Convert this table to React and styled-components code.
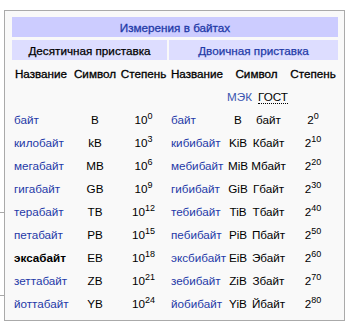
import React from "react";
import styled, { createGlobalStyle } from "styled-components";

const GlobalStyle = createGlobalStyle`
  body {
    margin: 0;
    background: #ffffff;
    font-family: "Liberation Sans", Arial, sans-serif;
  }
`;

const Page = styled.div`
  position: relative;
  width: 351px;
  height: 326px;
  padding: 10px 0 0 4px;
  box-sizing: border-box;
`;

const Tick = styled.div`
  position: absolute;
  left: 0;
  top: ${(p) => p.top}px;
  width: 4px;
  height: 1px;
  background: #a8a8a8;
`;

const InfoBox = styled.div`
  width: 341px;
  box-sizing: border-box;
  border: 1px solid #aaaaaa;
  background: #f9f9f9;
  padding: 3px 4px 4px 5px;
`;

const Table = styled.table`
  table-layout: fixed;
  width: 330px;
  border-collapse: separate;
  border-spacing: 2px 3px;
  font-size: 11.7px;
  color: #000;
`;

const Row = styled.tr`
  height: 20px;
`;

const TitleCell = styled.th`
  background: #ccccff;
  color: #1f3aa8;
  font-weight: normal;
  -webkit-text-stroke: 0.3px #1f3aa8;
  padding: 0;
  text-align: center;
`;

const GroupCell = styled.th`
  background: #ddddff;
  color: ${(p) => (p.link ? "#1f3aa8" : "#000")};
  font-weight: normal;
  -webkit-text-stroke: 0.25px ${(p) => (p.link ? "#1f3aa8" : "#000")};
  padding: 0;
  text-align: center;
`;

const HeadCell = styled.th`
  font-weight: normal;
  -webkit-text-stroke: 0.3px #000;
  padding: 0;
  text-align: center;
  white-space: nowrap;
`;

const SubHead = styled.td`
  padding: 0 0 0 ${(p) => p.shift || 0}px;
  text-align: center;
  color: ${(p) => (p.link ? "#3a55b0" : "#000")};
`;

const Abbr = styled.span`
  border-bottom: 1px dotted #000;
`;

const Cell = styled.td`
  padding: 0 0 0 ${(p) => (p.name ? 2 : 0)}px;
  text-align: ${(p) => (p.name ? "left" : "center")};
  white-space: nowrap;
  color: ${(p) => (p.link ? "#1f3aa8" : "#000")};
  font-weight: ${(p) => (p.strong ? "bold" : "normal")};
`;

const Sup = styled.sup`
  font-size: 9px;
  line-height: 1;
  vertical-align: 5px;
`;

const rows = [
  ["байт", "B", 0, "байт", "B", "байт", 0],
  ["килобайт", "kB", 3, "кибибайт", "KiB", "Кбайт", 10],
  ["мегабайт", "MB", 6, "мебибайт", "MiB", "Мбайт", 20],
  ["гигабайт", "GB", 9, "гибибайт", "GiB", "Гбайт", 30],
  ["терабайт", "TB", 12, "тебибайт", "TiB", "Тбайт", 40],
  ["петабайт", "PB", 15, "пебибайт", "PiB", "Пбайт", 50],
  ["эксабайт", "EB", 18, "эксбибайт", "EiB", "Эбайт", 60],
  ["зеттабайт", "ZB", 21, "зебибайт", "ZiB", "Збайт", 70],
  ["йоттабайт", "YB", 24, "йобибайт", "YiB", "Йбайт", 80],
];

export default function App() {
  return (
    <>
      <GlobalStyle />
      <Page>
        <Tick top={212} />
        <Tick top={295} />
        <InfoBox>
          <Table>
            <colgroup>
              <col style={{ width: 58 }} />
              <col style={{ width: 46 }} />
              <col style={{ width: 47 }} />
              <col style={{ width: 56 }} />
              <col style={{ width: 22 }} />
              <col style={{ width: 35 }} />
              <col style={{ width: 50 }} />
            </colgroup>
            <tbody>
              <Row>
                <TitleCell colSpan={7}>Измерения в байтах</TitleCell>
              </Row>
              <Row>
                <GroupCell colSpan={3}>Десятичная приставка</GroupCell>
                <GroupCell colSpan={4} link>
                  Двоичная приставка
                </GroupCell>
              </Row>
              <Row>
                <HeadCell>Название</HeadCell>
                <HeadCell>Символ</HeadCell>
                <HeadCell>Степень</HeadCell>
                <HeadCell>Название</HeadCell>
                <HeadCell colSpan={2}>Символ</HeadCell>
                <HeadCell>Степень</HeadCell>
              </Row>
              <Row>
                <SubHead colSpan={4} />
                <SubHead link>МЭК</SubHead>
                <SubHead shift={7}>
                  <Abbr>ГОСТ</Abbr>
                </SubHead>
                <SubHead />
              </Row>
              {rows.map((r) => (
                <Row key={r[0]}>
                  <Cell name link={r[0] !== "эксабайт"} strong={r[0] === "эксабайт"}>
                    {r[0]}
                  </Cell>
                  <Cell>{r[1]}</Cell>
                  <Cell>
                    10<Sup>{r[2]}</Sup>
                  </Cell>
                  <Cell name link>
                    {r[3]}
                  </Cell>
                  <Cell>{r[4]}</Cell>
                  <Cell>{r[5]}</Cell>
                  <Cell>
                    2<Sup>{r[6]}</Sup>
                  </Cell>
                </Row>
              ))}
            </tbody>
          </Table>
        </InfoBox>
      </Page>
    </>
  );
}
